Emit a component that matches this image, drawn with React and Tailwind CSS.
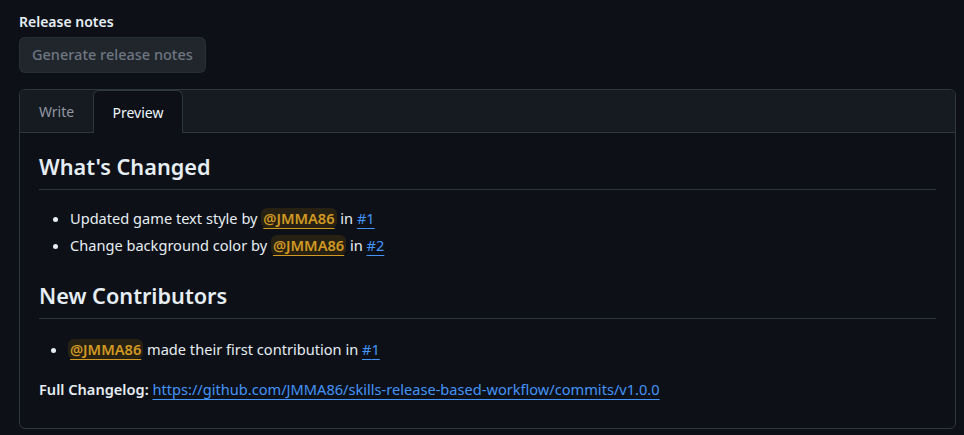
import React from "react";

function Mention() {
  return (
    <span className="rounded-[6px] bg-[#bb800926] px-[2px] font-semibold text-[#d29922] underline decoration-[#d29922] underline-offset-[4px]">
      @JMMA86
    </span>
  );
}

function Issue({ n }) {
  return (
    <span className="text-[#4493f8] underline decoration-[#4493f8] underline-offset-[4px]">#{n}</span>
  );
}

export default function App() {
  return (
    <div
      className="min-h-[435px] w-full bg-[#0d1117] px-[19px] pt-[13px] text-[#e6edf3]"
      style={{ fontFamily: '"Noto Sans", "Segoe UI", sans-serif' }}
    >
      <div className="text-[14px] font-semibold leading-[18px]">Release notes</div>
      <button
        disabled
        className="mt-[6px] h-[36px] rounded-[6px] border border-[#30363d80] bg-[#21262d] px-[12px] text-[14.5px] font-medium text-[#6e7681]"
      >
        Generate release notes
      </button>

      {/* Editor card */}
      <div className="mt-[16px] w-[937px] overflow-hidden rounded-[6px] border border-[#30363d]">
        <div className="flex h-[43px] border-b border-[#30363d] bg-[#161b22]">
          <div className="flex w-[73px] items-center justify-center text-[14px] text-[#9198a1]">Write</div>
          <div className="-mb-px flex w-[90px] items-center justify-center rounded-t-[6px] border-x border-t border-[#30363d] bg-[#0d1117] text-[14px] text-[#f0f6fc]">
            Preview
          </div>
        </div>

        <div className="px-[19px] pb-[27px] pt-[19px] text-[14.6px] leading-[24px]">
          <h2 className="border-b border-[#3d444db3] pb-[7px] text-[21.7px] font-semibold leading-[30px]">What's Changed</h2>
          <ul className="mt-[16px] list-disc pl-[31px]">
            <li>
              Updated game text style by <Mention /> in <Issue n={1} />
            </li>
            <li className="mt-[3px]">
              Change background color by <Mention /> in <Issue n={2} />
            </li>
          </ul>

          <h2 className="mt-[24px] border-b border-[#3d444db3] pb-[7px] text-[21.7px] font-semibold leading-[30px]">New Contributors</h2>
          <ul className="mt-[18px] list-disc pl-[29px]">
            <li>
              <Mention /> made their first contribution in <Issue n={1} />
            </li>
          </ul>

          <p className="mt-[16px]">
            <span className="font-semibold">Full Changelog:</span>{" "}
            <span className="text-[#4493f8] underline decoration-[#4493f8] underline-offset-[4px]">
              https://github.com/JMMA86/skills-release-based-workflow/commits/v1.0.0
            </span>
          </p>
        </div>
      </div>
    </div>
  );
}
